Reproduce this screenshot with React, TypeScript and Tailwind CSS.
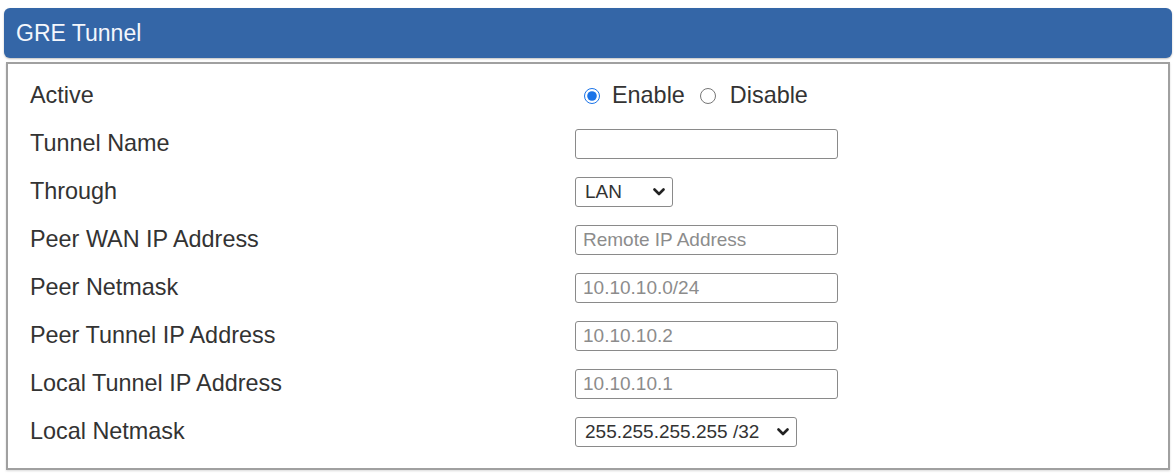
import { useState } from 'react'

const font = { fontFamily: '"Liberation Sans", Arial, sans-serif' }

function Chevron() {
  return (
    <svg className="pointer-events-none absolute right-[8px] top-1/2 -translate-y-1/2" width="12" height="8" viewBox="0 0 12 8">
      <path d="M1.5 1.5 L6 6 L10.5 1.5" fill="none" stroke="#222" strokeWidth="2.6" strokeLinecap="round" strokeLinejoin="round" />
    </svg>
  )
}

function Row({ label, children }: { label: string; children: React.ReactNode }) {
  return (
    <div className="flex h-[48px] items-center">
      <div className="w-[545px] shrink-0 text-[23.4px] text-[#333]">{label}</div>
      <div className="flex items-center">{children}</div>
    </div>
  )
}

function TextBox({ placeholder }: { placeholder?: string }) {
  return (
    <input
      type="text"
      placeholder={placeholder}
      className="h-[30px] w-[263px] rounded-[3px] border border-[#8a8a8a] bg-white px-[7px] text-[19px] text-[#333] outline-none placeholder:text-[#8c8c8c]"
      style={font}
    />
  )
}

export default function App() {
  const [active, setActive] = useState('enable')

  return (
    <div className="min-h-screen bg-white px-[4px] pt-[8px]" style={font}>
      {/* Panel header */}
      <div className="flex h-[50px] items-center rounded-[6px] bg-[#3466a7] pl-[12px] text-[23px] text-[#f4f7fc] shadow-[0_1px_2px_rgba(0,0,0,0.25)]">
        GRE Tunnel
      </div>

      {/* Settings box */}
      <div className="mx-[2px] mt-[4px] border-2 border-[#a0a0a0] pb-[12px] pl-[22px] pt-[8px] shadow-[0_1px_2px_rgba(0,0,0,0.15)]">
        <Row label="Active">
          <label className="ml-[9px] flex items-center text-[23.4px] text-[#333]">
            <input
              type="radio"
              name="active"
              checked={active === 'enable'}
              onChange={() => setActive('enable')}
              className="m-0 h-[16px] w-[16px] accent-[#1a73e8]"
            />
            <span className="ml-[12px]">Enable</span>
          </label>
          <label className="ml-[15px] flex items-center text-[23.4px] text-[#333]">
            <input
              type="radio"
              name="active"
              checked={active === 'disable'}
              onChange={() => setActive('disable')}
              className="m-0 h-[16px] w-[16px] accent-[#1a73e8]"
            />
            <span className="ml-[14px]">Disable</span>
          </label>
        </Row>
        <Row label="Tunnel Name">
          <TextBox />
        </Row>
        <Row label="Through">
          <div className="relative">
            <select
              className="h-[30px] w-[98px] appearance-none rounded-[3px] border border-[#8a8a8a] bg-white pl-[9px] text-[19px] text-[#333] outline-none"
              style={font}
              defaultValue="LAN"
            >
              <option>LAN</option>
              <option>WAN</option>
            </select>
            <Chevron />
          </div>
        </Row>
        <Row label="Peer WAN IP Address">
          <TextBox placeholder="Remote IP Address" />
        </Row>
        <Row label="Peer Netmask">
          <TextBox placeholder="10.10.10.0/24" />
        </Row>
        <Row label="Peer Tunnel IP Address">
          <TextBox placeholder="10.10.10.2" />
        </Row>
        <Row label="Local Tunnel IP Address">
          <TextBox placeholder="10.10.10.1" />
        </Row>
        <Row label="Local Netmask">
          <div className="relative">
            <select
              className="h-[30px] w-[222px] appearance-none rounded-[3px] border border-[#8a8a8a] bg-white pl-[9px] text-[19px] text-[#333] outline-none"
              style={font}
              defaultValue="32"
            >
              <option value="32">255.255.255.255 /32</option>
              <option value="24">255.255.255.0 /24</option>
            </select>
            <Chevron />
          </div>
        </Row>
      </div>
    </div>
  )
}
